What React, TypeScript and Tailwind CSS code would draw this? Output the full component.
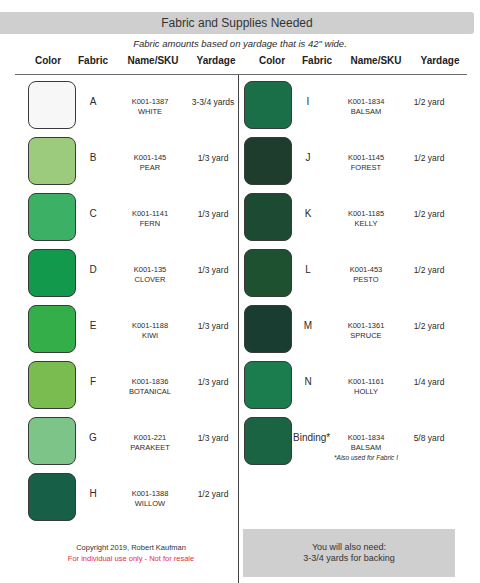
import React from "react";

type Row = {
  color: string;
  letter: string;
  sku: string;
  name: string;
  yardage: string;
  note?: string;
};

const leftRows: Row[] = [
  { color: "#f7f7f7", letter: "A", sku: "K001-1387", name: "WHITE", yardage: "3-3/4 yards" },
  { color: "#9ccb7d", letter: "B", sku: "K001-145", name: "PEAR", yardage: "1/3 yard" },
  { color: "#3cb166", letter: "C", sku: "K001-1141", name: "FERN", yardage: "1/3 yard" },
  { color: "#12994b", letter: "D", sku: "K001-135", name: "CLOVER", yardage: "1/3 yard" },
  { color: "#34ae49", letter: "E", sku: "K001-1188", name: "KIWI", yardage: "1/3 yard" },
  { color: "#7bbc50", letter: "F", sku: "K001-1836", name: "BOTANICAL", yardage: "1/3 yard" },
  { color: "#7dc489", letter: "G", sku: "K001-221", name: "PARAKEET", yardage: "1/3 yard" },
  { color: "#175f46", letter: "H", sku: "K001-1388", name: "WILLOW", yardage: "1/2 yard" },
];

const rightRows: Row[] = [
  { color: "#1a6e48", letter: "I", sku: "K001-1834", name: "BALSAM", yardage: "1/2 yard" },
  { color: "#1f3d2c", letter: "J", sku: "K001-1145", name: "FOREST", yardage: "1/2 yard" },
  { color: "#1c4a32", letter: "K", sku: "K001-1185", name: "KELLY", yardage: "1/2 yard" },
  { color: "#1d5130", letter: "L", sku: "K001-453", name: "PESTO", yardage: "1/2 yard" },
  { color: "#193d30", letter: "M", sku: "K001-1361", name: "SPRUCE", yardage: "1/2 yard" },
  { color: "#1b7c4e", letter: "N", sku: "K001-1161", name: "HOLLY", yardage: "1/4 yard" },
  {
    color: "#1b6443",
    letter: "Binding*",
    sku: "K001-1834",
    name: "BALSAM",
    yardage: "5/8 yard",
    note: "*Also used for Fabric I",
  },
];

const Swatch = ({ color }: { color: string }) => (
  <div
    className="w-[48px] h-[48px] shrink-0 rounded-[8px] border border-[#3a3a3a]"
    style={{ backgroundColor: color }}
  />
);

const LeftRow = ({ row }: { row: Row }) => (
  <div className="flex h-[48px] pl-[28px]">
    <Swatch color={row.color} />
    <div className="w-[34px] flex justify-center pt-[16px] text-[10px] leading-[10px]">{row.letter}</div>
    <div className="w-[80px] flex flex-col items-center pt-[16px] text-[7.5px] leading-[10px]">
      <span>{row.sku}</span>
      <span>{row.name}</span>
    </div>
    <div className="w-[46px] flex justify-center pt-[16px] text-[8.5px] leading-[10px] whitespace-nowrap">
      {row.yardage}
    </div>
  </div>
);

const RightRow = ({ row }: { row: Row }) => (
  <div className="flex h-[48px] pl-[5px]">
    <Swatch color={row.color} />
    <div
      className={
        row.letter.length > 1
          ? "w-[32px] flex justify-start pl-[1px] pt-[16px] text-[10px] leading-[10px] whitespace-nowrap"
          : "w-[32px] flex justify-center pt-[16px] text-[10px] leading-[10px] whitespace-nowrap"
      }
    >
      {row.letter}
    </div>
    <div className="w-[84px] flex flex-col items-center pt-[16px] text-[7.5px] leading-[10px] whitespace-nowrap">
      <span>{row.sku}</span>
      <span>{row.name}</span>
      {row.note && <span className="italic text-[6.5px] leading-[8px] mt-[1px]">{row.note}</span>}
    </div>
    <div className="w-[42px] flex justify-center pt-[16px] text-[8.5px] leading-[10px] whitespace-nowrap">
      {row.yardage}
    </div>
  </div>
);

const headers = [
  { label: "Color", w: "w-[44px]" },
  { label: "Fabric", w: "w-[46px]" },
  { label: "Name/SKU", w: "w-[74px]" },
  { label: "Yardage", w: "w-[52px] mr-[2px]" },
  { label: "Color", w: "w-[56px]" },
  { label: "Fabric", w: "w-[34px]" },
  { label: "Name/SKU", w: "w-[84px]" },
  { label: "Yardage", w: "w-[44px]" },
];

const App = () => {
  return (
    <div
      className="w-[480px] h-[583px] bg-white overflow-hidden flex flex-col text-[#2b2b2b]"
      style={{ fontFamily: '"Liberation Sans", Arial, sans-serif' }}
    >
      <div className="mt-[12px] h-[22px] w-[474px] bg-[#cfcfcf] rounded-r-[3px] flex items-center justify-center text-[12px] text-[#333]">
        Fabric and Supplies Needed
      </div>
      <div className="mt-[3px] h-[14px] flex items-center justify-center italic text-[9.5px]">
        Fabric amounts based on yardage that is 42" wide.
      </div>
      <div className="mt-[2px] h-[14px] flex items-center pl-[26px] font-bold text-[10px] text-[#222]">
        {headers.map((h, i) => (
          <div key={i} className={`${h.w} flex justify-center whitespace-nowrap`}>
            {h.label}
          </div>
        ))}
      </div>
      <div className="mt-[7px] ml-[15px] w-[452px] h-px bg-[#6a6a6a]" />
      <div className="flex flex-1">
        <div className="w-[239px] border-r border-[#444] flex flex-col">
          <div className="flex flex-col gap-[8px] pt-[6px]">
            {leftRows.map((r) => (
              <LeftRow key={r.letter} row={r} />
            ))}
          </div>
          <div className="mt-[21px] pl-[24px] flex flex-col items-center text-[7.5px] leading-[11px]">
            <span className="text-[#333]">Copyright 2019, Robert Kaufman</span>
            <span className="text-[#e2303e]">For individual use only - Not for resale</span>
          </div>
        </div>
        <div className="flex-1 flex flex-col">
          <div className="flex flex-col gap-[8px] pt-[6px]">
            {rightRows.map((r) => (
              <RightRow key={r.letter} row={r} />
            ))}
          </div>
          <div className="mt-[64px] ml-[4px] w-[212px] h-[48px] bg-[#cfcfcf] flex flex-col items-center justify-center text-[9px] leading-[11px] text-[#333]">
            <span>You will also need:</span>
            <span>3-3/4 yards for backing</span>
          </div>
        </div>
      </div>
    </div>
  );
};

export default App;
